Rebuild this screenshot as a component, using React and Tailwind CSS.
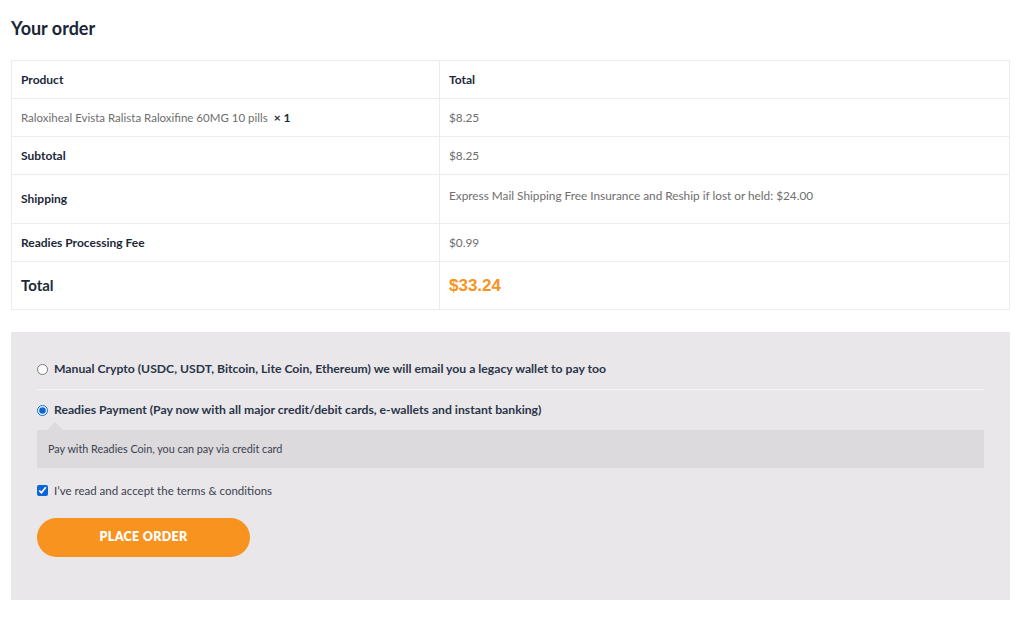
import React from "react";

const rows = [
  { label: "Raloxiheal Evista Ralista Raloxifine 60MG 10 pills", qty: "× 1", value: "$8.25", product: true },
  { label: "Subtotal", value: "$8.25" },
  { label: "Shipping", value: "Express Mail Shipping Free Insurance and Reship if lost or held: $24.00", tall: true },
  { label: "Readies Processing Fee", value: "$0.99" },
];

export default function App() {
  return (
    <div className="min-h-[622px] bg-white pl-[11px] pr-[14px] pt-[16px] text-[#1d2939]" style={{ fontFamily: "Lato, 'Noto Sans', sans-serif" }}>
      <h3 className="text-[18px] font-bold leading-[24px] text-[#1a2536]">Your order</h3>

      <table className="mt-[20px] w-full border-collapse border border-[#ececec] text-[12px]">
        <thead>
          <tr className="h-[38px]">
            <th className="w-[428px] border border-[#ececec] px-[9px] text-left font-bold text-[#1d2939]">Product</th>
            <th className="border border-[#ececec] px-[9px] text-left font-bold text-[#1d2939]">Total</th>
          </tr>
        </thead>
        <tbody>
          {rows.map((r, i) => (
            <tr key={i} className={r.tall ? "h-[49px]" : "h-[38px]"}>
              <td className={"border border-[#ececec] px-[9px] " + (r.product ? "text-[11.5px] text-[#6e6e6e]" : "font-bold text-[#1d2939]")}>
                {r.label}
                {r.qty && <strong className="ml-[6px] text-[12px] font-bold text-[#1d2939]">{r.qty}</strong>}
              </td>
              <td className={"border border-[#ececec] px-[9px] text-[11.8px] text-[#6e6e6e] " + (r.tall ? "align-top pt-[12px]" : "")}>
                {r.value}
              </td>
            </tr>
          ))}
          <tr className="h-[48px]">
            <td className="border border-[#ececec] px-[9px] text-[15px] font-bold text-[#1d2939]">Total</td>
            <td className="border border-[#ececec] px-[9px] text-[17px] font-bold text-[#f7931e]" style={{ fontFamily: "'Liberation Sans', Arial, sans-serif" }}>
              $33.24
            </td>
          </tr>
        </tbody>
      </table>

      <div className="mt-[22px] h-[268px] bg-[#e9e7ea] px-[26px] pt-[28px]">
        <div className="flex items-center gap-[6px] pb-[11px] border-b border-[#f5f4f5]">
          <input type="radio" name="pm" className="h-[11px] w-[11px] accent-[#0b64d8]" />
          <span className="text-[12.2px] font-bold text-[#2a3547]">
            Manual Crypto (USDC, USDT, Bitcoin, Lite Coin, Ethereum) we will email you a legacy wallet to pay too
          </span>
        </div>
        <div className="flex items-center gap-[6px] pt-[11px] pb-[10px]">
          <input type="radio" name="pm" defaultChecked className="h-[11px] w-[11px] accent-[#0b64d8]" />
          <span className="text-[12.2px] font-bold text-[#2a3547]">
            Readies Payment (Pay now with all major credit/debit cards, e-wallets and instant banking)
          </span>
        </div>
        <div className="relative h-[38px] bg-[#dcdadc] px-[11px] flex items-center text-[10.8px] text-[#3a4150]">
          <span className="absolute left-[10px] top-[-8px] h-0 w-0 border-x-[8px] border-b-[8px] border-x-transparent border-b-[#dcdadc]" />
          Pay with Readies Coin, you can pay via credit card
        </div>
        <label className="mt-[14px] flex items-center gap-[6px] text-[11.5px] text-[#3a4150]">
          <input type="checkbox" defaultChecked className="h-[11px] w-[11px] accent-[#0b64d8]" />
          I’ve read and accept the terms &amp; conditions
        </label>
        <button type="button" className="mt-[19px] h-[39px] w-[213px] rounded-[20px] bg-[#f7931e] text-[12.5px] font-extrabold uppercase tracking-[0.3px] text-white">
          Place order
        </button>
      </div>
    </div>
  );
}
